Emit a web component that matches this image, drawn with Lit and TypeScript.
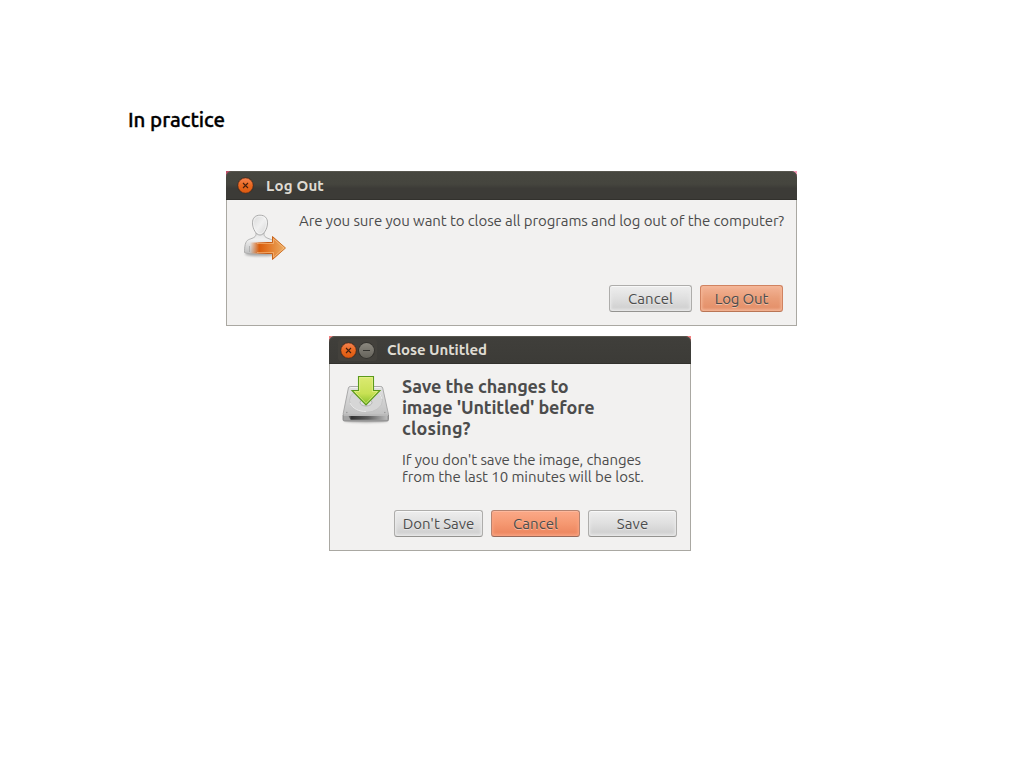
import { LitElement, html, css, svg } from "lit";
import { customElement, property, state } from "lit/decorators.js";

/** One line of text, tracked so that it fills the given measure. */
@customElement("fit-line")
class FitLine extends LitElement {
  @property({ type: String }) text = "";
  @property({ type: Number }) measure = 0;
  @state() private tracking = 0;
  static styles = css`
    :host { display: block; white-space: nowrap; }
    .line { display: inline-block; vertical-align: top; line-height: inherit; }
  `;
  firstUpdated() {
    const el = this.renderRoot.querySelector(".line") as HTMLElement;
    this.tracking = (this.measure - el.getBoundingClientRect().width) / this.text.length;
  }
  render() {
    return html`<span class="line" style="letter-spacing:${this.tracking}px">${this.text}</span>`;
  }
}

const closeButton = svg`
  <circle cx="9.5" cy="9.5" r="8.3" fill="#302f2b"/>
  <circle cx="9.5" cy="9.5" r="7.5" fill="url(#orange)" stroke="#8a3a17" stroke-width=".6"/>
  <path d="M7 7l5 5M12 7l-5 5" stroke="#44200f" stroke-width="1.1"/>`;

@customElement("window-button")
class WindowButton extends LitElement {
  @property() kind = "close";
  static styles = css`
    :host { display: block; width: 18px; height: 18px; }
    svg { display: block; }
  `;
  render() {
    return html`<svg width="18" height="18" viewBox="0 0 18 18">
      <defs>
        <linearGradient id="orange" x1="0" y1="0" x2="0" y2="1"><stop stop-color="#f58453"/><stop offset=".5" stop-color="#e9681f"/><stop offset="1" stop-color="#dc5a10"/></linearGradient>
        <linearGradient id="grey" x1="0" y1="0" x2="0" y2="1"><stop stop-color="#8b887f"/><stop offset="1" stop-color="#65635b"/></linearGradient>
      </defs>
      ${this.kind === "close" ? closeButton : svg`
        <circle cx="9.5" cy="9.5" r="8.3" fill="#302f2b"/>
        <circle cx="9.5" cy="9.5" r="7.5" fill="url(#grey)"/>
        <path d="M6 9.500h7" stroke="#34332f" stroke-width="1"/>`}
    </svg>`;
  }
}

@customElement("app-root")
class AppRoot extends LitElement {
  static styles = css`
    * { box-sizing: border-box; }
    :host {
      display: flex; flex-direction: column; width: 1025px; height: 768px;
      background: #fff; overflow: hidden; color: #4c4c4c;
      font: 15px/17px Ubuntu, "Noto Sans", sans-serif;
    }
    .heading { margin: 107px 0 0 128px; height: 64px; font-size: 20.5px; line-height: 26px; font-weight: 500; color: #000; -webkit-text-stroke: .35px #000; }
    .dialog { display: flex; flex-direction: column; background: linear-gradient(90deg, #c0506a, #f59ab8); }
    .logout { width: 571px; height: 155px; margin-left: 226px; }
    .save { width: 362px; height: 215px; margin: 10px 0 0 329px; background: #ef8080; }
    .bar {
      display: flex; align-items: center; height: 29px; flex: none;
      border-radius: 6px 6px 0 0; color: #dfdbd2; font-weight: 700;
      background: linear-gradient(#474740, #45453e 45%, #3c3b37 60%, #3c3b37);
      box-shadow: inset 0 1px #57564e, inset 0 -1px #32312d;
      padding: 0 0 1px 10px;
    }
    .save .bar { height: 28px; background: linear-gradient(#403f3b, #3c3b37); }
    .logout .title { padding-left: 12px; }
    .save .title { padding-left: 10px; padding-bottom: 1px; }
    .controls { display: flex; height: 22px; align-items: center; background: #43413c; border-radius: 3px; padding: 1px 2px 0 1px; margin-left: -1px; }
    .body { flex: 1; display: flex; flex-direction: column; border: solid #aaa8a2; border-width: 0 1px 1px; background: #f2f1f0; }
    .content { flex: 1; display: flex; }
    .logout .content { padding: 12px 0 0 15px; }
    .save .content { padding: 10px 0 0 11px; }
    .logout .message { padding: 0 0 0 9px; }
    .save .message { padding: 2px 0 0 13px; }
    .primary { font-size: 18px; line-height: 21px; font-weight: 700; margin-bottom: 12px; }
    .actions { display: flex; justify-content: flex-end; gap: 8px; padding: 0 13px 13px; }
    button {
      display: flex; align-items: center; justify-content: center; height: 27px; width: 89px; padding: 0;
      font: inherit; color: #4c4c4c; border: 1px solid #aeadab; border-bottom-color: #949390; border-radius: 3px;
      background: linear-gradient(#eeeeee, #dfdfdf 50%, #d2d2d2 85%, #d8d8d8);
      box-shadow: inset 0 1px #f8f8f8, inset 0 0 3px 1px #ececec;
      text-shadow: 0 1px rgba(255, 255, 255, .4);
    }
    .logout button { width: 83px; }
    .logout .suggested {
      border-color: #d08361; border-bottom-color: #b97555;
      background: linear-gradient(#f3b496, #e99d78 50%, #e5926c 85%, #eaa07e);
      box-shadow: inset 0 0 3px 1px #f5b899;
    }
    .save .suggested {
      border-color: #b58370; border-bottom-color: #98695a;
      background: linear-gradient(#fba988, #f59871 50%, #ee8962 85%, #f19370);
      box-shadow: inset 0 1px #fdb89c, inset 0 0 3px 1px #f9a583;
    }
    .icon { display: block; flex: none; }
  `;

  private logoutIcon = html`<svg class="icon" width="48" height="50" viewBox="0 0 48 50">
    <defs>
      <linearGradient id="head" x1="0" y1="0" x2="1" y2="1"><stop stop-color="#d8d8d8"/><stop offset=".5" stop-color="#f0f0f0"/><stop offset="1" stop-color="#d4d4d4"/></linearGradient>
      <linearGradient id="torso" x1="0" y1="0" x2="0" y2="1"><stop stop-color="#dedede"/><stop offset=".35" stop-color="#f0f0f0"/><stop offset="1" stop-color="#bcbcbc"/></linearGradient>
      <linearGradient id="arrow" x1="0" x2="1"><stop stop-color="#dc6414" stop-opacity="0"/><stop offset=".26" stop-color="#d95d0c"/><stop offset=".5" stop-color="#e27625"/><stop offset="1" stop-color="#ecb068"/></linearGradient>
      <linearGradient id="edge" x1="0" x2="1"><stop offset=".2" stop-color="#c65a13" stop-opacity="0"/><stop offset=".5" stop-color="#c65a13"/><stop offset="1" stop-color="#cf7a30"/></linearGradient>
      <filter id="soft" x="-20%" y="-100%" width="140%" height="300%"><feGaussianBlur stdDeviation="1.1"/></filter>
    </defs>
    <ellipse cx="19" cy="42" rx="16" ry="2.3" fill="#777" opacity=".55" filter="url(#soft)"/>
    <path d="M2.500 40.500c0-6 .7-11.300 4-12.800 3-1.300 7-1.900 7.500-5.200v-3h8v3c.5 3.300 4.500 3.900 7.500 5.200 3.300 1.500 4 6.800 4 12.800-3 2.300-28 2.300-31 0z" fill="url(#torso)" stroke="#aaa" stroke-width=".9"/>
    <path d="M7.500 40v-6" stroke="#aaa" stroke-width=".8"/>
    <path d="M18 3.200c5 0 7.500 3 7.500 7.600 0 3-.9 6-2.300 8.300C21.800 21.600 20.200 23 18 23s-3.800-1.400-5.200-3.900c-1.400-2.300-2.300-5.300-2.300-8.300 0-4.600 2.500-7.600 7.500-7.600z" fill="url(#head)" stroke="#acacac"/>
    <path d="M18 4.300c4.300 0 6.400 2.600 6.400 6.600 0 5.400-3.100 10.900-6.400 10.900s-6.400-5.500-6.400-10.900c0-4 2.100-6.600 6.400-6.600z" fill="none" stroke="#fff" opacity=".5"/>
    <path d="M8 30.500h22.500V24.500L43.500 36 30.500 47.500V41.500H8z" fill="url(#arrow)" stroke="url(#edge)"/>
    <path d="M15 31.500h16.500V26.800L42 36 31.500 45.200V40.500H15" fill="none" stroke="#ffd09a" stroke-opacity=".5"/>
  </svg>`;

  private saveIcon = html`<svg class="icon" width="48" height="52" viewBox="0 0 48 52">
    <defs>
      <linearGradient id="top" x1="0" y1="0" x2="0" y2="1"><stop stop-color="#e2e2e2"/><stop offset="1" stop-color="#c2c2c2"/></linearGradient>
      <linearGradient id="front" x1="0" x2="1"><stop stop-color="#777"/><stop offset=".08" stop-color="#333"/><stop offset=".5" stop-color="#5c5c5c"/><stop offset="1" stop-color="#bababa"/></linearGradient>
      <linearGradient id="green" x1="0" y1="0" x2="0" y2="1"><stop stop-color="#dcea72"/><stop offset=".6" stop-color="#c8e154"/><stop offset="1" stop-color="#84bf28"/></linearGradient>
      <filter id="blur" x="-10%" y="-100%" width="120%" height="300%"><feGaussianBlur stdDeviation=".8"/></filter>
    </defs>
    <ellipse cx="25" cy="47" rx="22" ry="1.500" fill="#555" opacity=".5" filter="url(#blur)"/>
    <path d="M9.200 12.500h30.600q1.500 0 1.900 1.500l5.800 26.500H2L7.400 14q.4-1.500 1.800-1.500z" fill="url(#top)" stroke="#aaa"/>
    <path d="M9.500 13.500h30" stroke="#f2f2f2"/>
    <ellipse cx="25" cy="26.500" rx="16.500" ry="11.800" fill="#d6d6d6" stroke="#c0c0c0" stroke-width=".8"/>
    <path d="M9 29c3 6 9 8.500 16 8.500M41 25c-1-4-3-6-6-8" fill="none" stroke="#e9e9e9" stroke-width="1"/>
    <ellipse cx="25" cy="28.500" rx="6" ry="3.500" fill="#e2e2e2" stroke="#adadad" stroke-width=".9"/>
    <path d="M2 41h45.500v4.500q0 1.500-1.500 1.500H3.500q-1.500 0-1.500-1.500z" fill="#a4a4a4" stroke="#808080" stroke-width=".8"/>
    <path d="M2.500 41h44.500" stroke="#ddd"/>
    <path d="M7.500 42h38.500v3.800H9.500z" fill="url(#front)"/>
    <circle cx="5.800" cy="38.500" r=".8" fill="#999"/><circle cx="43.800" cy="38.500" r=".8" fill="#999"/>
    <path d="M17.500 2.500h15V16.500H39L25 31 11 16.500h6.500z" fill="url(#green)" stroke="#5c9a1c" stroke-width="1.100"/>
    <path d="M18.600 17.600V3.600h12.800v14h5L25 29.300 13.600 17.600z" fill="none" stroke="#f0f8a8" stroke-opacity=".5"/>
  </svg>`;

  render() {
    return html`
      <div class="heading"><fit-line text="In practice" measure="97"></fit-line></div>
      <section class="dialog logout">
        <header class="bar"><window-button></window-button><div class="title"><fit-line text="Log Out" measure="58"></fit-line></div></header>
        <div class="body">
          <div class="content">
            ${this.logoutIcon}
            <div class="message"><fit-line text="Are you sure you want to close all programs and log out of the computer?" measure="485"></fit-line></div>
          </div>
          <div class="actions">
            <button><fit-line text="Cancel" measure="45"></fit-line></button>
            <button class="suggested"><fit-line text="Log Out" measure="53.5"></fit-line></button>
          </div>
        </div>
      </section>
      <section class="dialog save">
        <header class="bar">
          <div class="controls"><window-button></window-button><window-button kind="minimise"></window-button></div>
          <div class="title"><fit-line text="Close Untitled" measure="100"></fit-line></div>
        </header>
        <div class="body">
          <div class="content">
            ${this.saveIcon}
            <div class="message">
              <div class="primary">
                <fit-line text="Save the changes to" measure="166.5"></fit-line>
                <fit-line text="image 'Untitled' before" measure="192.5"></fit-line>
                <fit-line text="closing?" measure="68.5"></fit-line>
              </div>
              <fit-line text="If you don't save the image, changes" measure="239"></fit-line>
              <fit-line text="from the last 10 minutes will be lost." measure="242"></fit-line>
            </div>
          </div>
          <div class="actions">
            <button><fit-line text="Don't Save" measure="71.5"></fit-line></button>
            <button class="suggested"><fit-line text="Cancel" measure="45"></fit-line></button>
            <button><fit-line text="Save" measure="31.5"></fit-line></button>
          </div>
        </div>
      </section>`;
  }
}
